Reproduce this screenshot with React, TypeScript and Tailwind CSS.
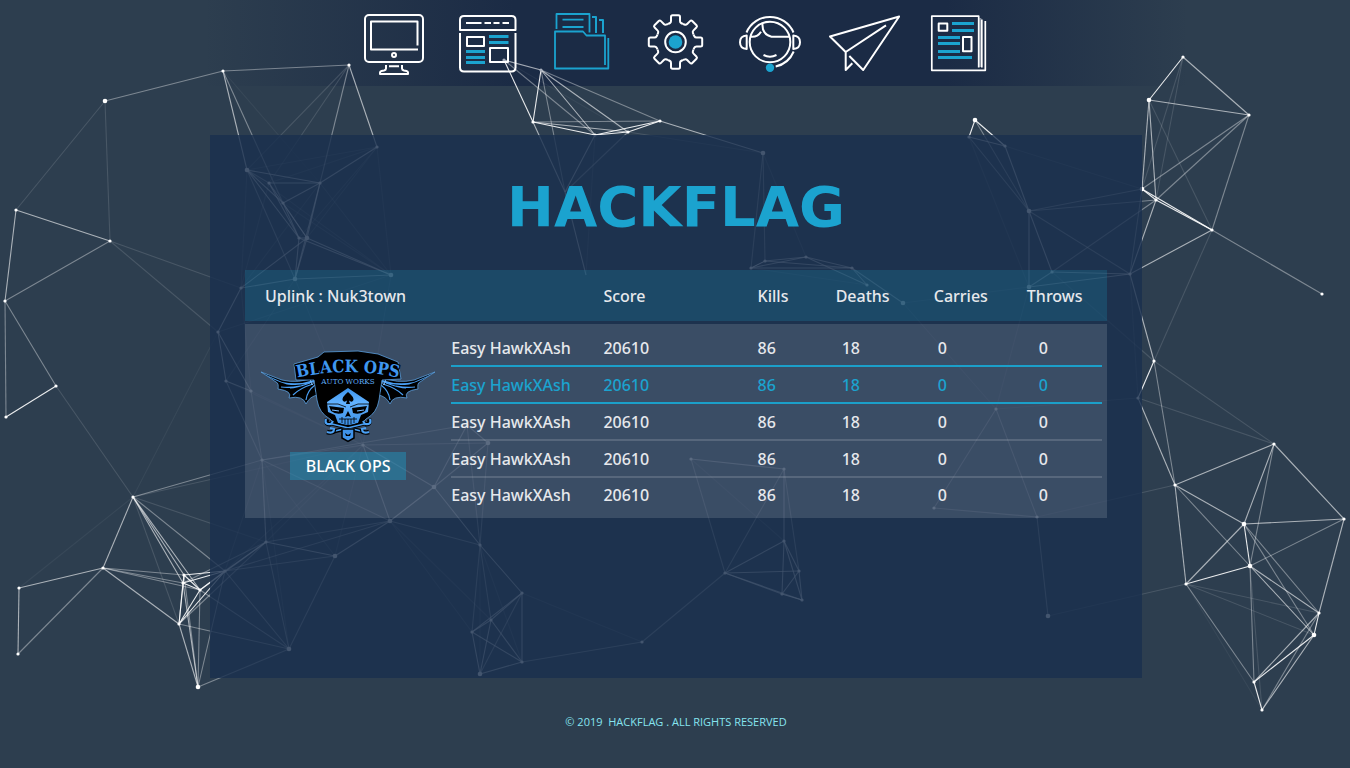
import type { ReactNode } from "react";

type Point = [number, number];

const nodes: Record<string, Point> = {
  a: [105, 101], b: [223, 71], c: [349, 65], d: [16, 210], e: [110, 241], f: [5, 301], g: [56, 386], h: [6, 417],
  i: [377, 147], j: [247, 170], k: [269, 183], l: [320, 183], m: [283, 203], n: [299, 238], o: [307, 238],
  p: [295, 279], q: [391, 275], r: [241, 288], s: [218, 332], t: [226, 381], u: [251, 391],
  v: [133, 497], w: [19, 588], x: [18, 654], y: [103, 568], z: [184, 575],
  A: [183, 583], B: [200, 590], C: [179, 624], D: [198, 687], E: [225, 571], F: [266, 542], G: [335, 556],
  H: [289, 649], I: [262, 460], J: [390, 521], K: [434, 487], L: [363, 445], M: [467, 425], N: [488, 443],
  O: [480, 545], P: [522, 593], Q: [491, 620], R: [472, 632], S: [522, 662], T: [480, 674], U: [642, 642],
  V: [725, 573], W: [691, 459], X: [784, 469], Y: [784, 541], Z: [799, 571],
  a2: [802, 600], b2: [782, 594], c2: [504, 60], d2: [541, 70], e2: [533, 122], f2: [595, 135], g2: [628, 132],
  h2: [660, 121], i2: [565, 192], j2: [763, 153], k2: [586, 275], l2: [751, 268], m2: [765, 261], n2: [806, 257],
  o2: [852, 268], p2: [867, 285], q2: [903, 303], r2: [975, 120], s2: [969, 137], t2: [1005, 146], u2: [1029, 211],
  v2: [1052, 272], w2: [1029, 287], x2: [1130, 274], y2: [1142, 189], z2: [1156, 200],
  A2: [1149, 100], B2: [1183, 57], C2: [1249, 115], D2: [1212, 230], E2: [1322, 294], F2: [1154, 361],
  G2: [1138, 398], H2: [996, 409], I2: [1274, 444], J2: [1175, 485], K2: [1344, 519], L2: [1244, 524],
  M2: [1250, 566], N2: [1186, 584], O2: [1319, 613], P2: [1314, 635], Q2: [1254, 682], R2: [1262, 710],
  S2: [1048, 616], T2: [1037, 517], U2: [934, 508],
};

const largeNodes = ["a", "j", "p", "q", "D", "G", "H", "K", "N", "T", "M2", "P2", "j2", "r2", "u2", "A2", "q2", "w2", "y2", "L2", "S2", "J", "o"];
const hiddenNodes = ["i2", "k2"];
const dimNodes = ["c2", "d2"];

const edgeGroups: { opacity: number; edges: string }[] = [
  {
    opacity: 0.9,
    edges:
      "z-A z-B A-B A-C B-C z-E A-E B-E C-E e2-f2 f2-g2 f2-h2 g2-h2 r2-s2 r2-t2 y2-z2 y2-D2 z2-D2 A2-B2 L2-M2 M2-N2 O2-P2 Q2-R2 G2-F2 g-h c2-e2 d2-e2 b2-a2 P2-Q2 l2-m2",
  },
  {
    opacity: 0.6,
    edges:
      "b-j c-i d-f d-e v-y w-y w-x z-C y-C v-z v-A v-B A-D C-D E-F B-F F-G G-J J-K K-M J-L K-L K-O K-N M-N i-l l-m j-l k-l j-m j-n k-n k-o m-n m-o n-o n-p o-p l-o l-p o-q n-q p-q p-r r-s s-t s-u t-u r-o A2-C2 B2-C2 A2-y2 A2-z2 z2-x2 D2-x2 x2-F2 G2-J2 I2-J2 I2-K2 I2-L2 J2-L2 J2-N2 K2-L2 K2-O2 L2-N2 M2-O2 M2-P2 O2-Q2 P2-R2 c2-d2 d2-f2 d2-g2 e2-g2 h2-j2 e2-i2 f2-i2 O-P P-Q P-R P-S Q-R Q-S Q-T R-S R-T S-T V-Y V-Z V-b2 V-a2 Y-b2 Y-Z Y-a2 Z-a2 Z-b2 X-Y W-X m2-n2 l2-n2 n2-o2 n2-p2 o2-p2 o2-q2 l2-o2 m2-o2 u2-v2 u2-w2 v2-w2 v2-x2 w2-x2 t2-u2 s2-t2 i2-k2 I-F",
  },
  {
    opacity: 0.38,
    edges:
      "a-b b-c e-f f-g f-h c-l b-m y-z y-A y-B v-E B-D z-D v-I y-x D-H D-E C-H B-H F-H G-H E-G I-L I-J J-O t-I u-I L-N I-M K-J O-Q O-R M-O N-O P-T U-V S-U X-Z V-X V-W C2-y2 C2-z2 C2-D2 D2-E2 F2-J2 I2-M2 K2-M2 J2-M2 L2-O2 L2-P2 M2-Q2 N2-Q2 O2-R2 c2-f2 d2-h2 e2-h2 g2-i2 d2-i2 j2-m2 j2-l2 s2-u2 r2-u2 y2-u2 y2-x2 z2-u2 z2-v2 u2-x2 H2-U2 H2-T2 T2-U2 T2-S2 J-E j-k p-j F-J A-F C-F E-H",
  },
  {
    opacity: 0.13,
    edges:
      "a-d a-e e-r e-s g-v v-C v-F v-L c-k c-j i-j i-k i-o i-n i-q l-q q-s q-L p-L r-j r-k r-l r-u p-t t-L u-L I-G I-H I-E L-G L-F L-E M-I P-U O-S O-T J-R J-Q W-Y n2-j2 j2-g2 l2-p2 f2-k2 B2-y2 B2-z2 A2-D2 D2-F2 F2-v2 F2-I2 G2-I2 x2-G2 G2-H2 J2-T2 N2-S2 N2-O2 N2-P2 M2-R2 y2-t2 w2-q2 w2-H2 q2-H2 w2-s2 j-q m-q",
  },
  { opacity: 0.05, edges: "w-v v-s N2-R2 c2-g2 b-l" },
];

function Network() {
  return (
    <svg
      className="pointer-events-none absolute inset-0 h-full w-full"
      viewBox="0 0 1350 768"
      preserveAspectRatio="xMidYMin slice"
      aria-hidden="true"
    >
      {edgeGroups.map((group) => (
        <g key={group.opacity} stroke="#fff" strokeWidth="1.1" strokeOpacity={group.opacity}>
          {group.edges.split(" ").map((edge, index) => {
            const [from, to] = edge.split("-");
            const [x1, y1] = nodes[from];
            const [x2, y2] = nodes[to];
            return <line key={index} x1={x1} y1={y1} x2={x2} y2={y2} />;
          })}
        </g>
      ))}
      {Object.entries(nodes)
        .filter(([id]) => !hiddenNodes.includes(id))
        .map(([id, [cx, cy]]) => (
          <circle
            key={id}
            cx={cx}
            cy={cy}
            r={largeNodes.includes(id) ? 2.3 : 1.6}
            fill={dimNodes.includes(id) ? "#a9b0bd" : "#fff"}
          />
        ))}
    </svg>
  );
}

const CYAN = "#1ba3cf";

function Icon({ left, color = "#fff", children }: { left: number; color?: string; children: ReactNode }) {
  return (
    <svg
      viewBox={`${left} 7 72 72`}
      className="size-[72px]"
      fill="none"
      stroke={color}
      strokeWidth="2"
      strokeLinejoin="round"
      aria-hidden="true"
    >
      {children}
    </svg>
  );
}

const toothAngles = [0, 45, 90, 135, 180, 225, 270, 315];

const navItems: { label: string; icon: ReactNode }[] = [
  {
    label: "Home",
    icon: (
      <Icon left={358}>
        <rect x="365" y="15" width="58" height="47" rx="4" />
        <path d="M417.5 45.5V21.5H371V49.5H418" />
        <circle cx="394" cy="55" r="2" />
        <path d="M389 66.3h10M386 65v3.500q0 1.500-2 2l-2.500.500q-1.500.500-1.500 1.500v1.500h28v-1.500q0-1-1.500-1.500l-2.500-.500q-2-.500-2-2V65" />
      </Icon>
    ),
  },
  {
    label: "Site",
    icon: (
      <Icon left={452}>
        <path d="M460 30V20q0-4 4-4H511.500q4 0 4 4V30ZM460 33V67.500q0 4 4 4H511.500q4 0 4-4V33" />
        <path d="M466 23H481.500M484.500 23H491M493.500 23H499.500M502.500 23H509" />
        <path d="M467 37H484V46H467ZM490 48H508V62H490Z" />
        <path stroke={CYAN} strokeWidth="3" d="M489 36.500H508.500M489 42.500H508.500M466 51.500H485M466 57.500H485M466 62.500H485" />
      </Icon>
    ),
  },
  {
    label: "Files",
    icon: (
      <Icon left={546} color={CYAN}>
        <path strokeWidth="1.8" d="M556.500 29V14H589.500V32.500M562.500 19.700H583.500M562.500 27H583.500" />
        <path strokeWidth="2" d="M592 17H596V33M599 20H603V33" />
        <path strokeWidth="1.8" d="M605 65V35.500H586.500L583 31.500H555V68.500H608.300V38" />
      </Icon>
    ),
  },
  {
    label: "Settings",
    icon: (
      <Icon left={640}>
        <g transform="translate(675.5 42)">
          {toothAngles.map((angle) => (
            <path
              key={angle}
              transform={`rotate(${angle})`}
              d="M-7.400-18L-5.500-19Q-4.500-19.500-4.500-21V-25Q-4.500-26.700-3-26.700H3Q4.500-26.700 4.500-25V-21Q4.500-19.500 5.500-19L7.400-18"
            />
          ))}
          <circle r="10.300" />
          <circle r="6.800" fill={CYAN} stroke="none" />
        </g>
      </Icon>
    ),
  },
  {
    label: "Support",
    icon: (
      <Icon left={734}>
        <circle cx="770" cy="42" r="20.300" />
        <path d="M746.500 32.500A25.500 25.500 0 0 1 793.500 32.500M793.700 51.500A25.500 25.500 0 0 1 775.700 66.500" />
        <path d="M746.700 35.500V49Q740 48.500 740 42.200T746.700 35.500ZM793.300 35.500V49Q800 48.500 800 42.200T793.300 35.500Z" />
        <path d="M762.500 22.500Q761.500 34.500 771.500 36.700H789.500M750.500 36.700Q757.500 37.500 761 31.700M763.500 55Q770 58.300 776.500 55" />
        <circle cx="770" cy="67.700" r="4.200" fill={CYAN} stroke="none" />
      </Icon>
    ),
  },
  {
    label: "Messages",
    icon: (
      <Icon left={828}>
        <path d="M849.300 56L863.200 70L899.200 16.500L830 36.500L845.700 52L886 25.300M845.700 52V70L852.300 63.300" />
      </Icon>
    ),
  },
  {
    label: "News",
    icon: (
      <Icon left={922}>
        <path strokeWidth="1.700" d="M978.700 67.500V16.200H931.800V70.300H985.300V21M981.800 67.500V19.500" />
        <path strokeOpacity=".45" d="M980.300 67V18" />
        <path d="M938.700 23.500H947.300V30.700H938.700ZM963 37H971.500V51.300H963Z" />
        <path stroke={CYAN} strokeWidth="3" d="M952 23.500H974M952 30.500H974M938 37.500H960M938 43.500H960M938 51.500H960M938 57.500H972" />
      </Icon>
    ),
  },
];

function Wing() {
  return (
    <g>
      <path
        fill="#000"
        stroke="#5b9fe0"
        strokeWidth=".8"
        d="M1 26L22 34Q38 38 56 31L62 52L58 49Q50 50 46 58Q43 49 29 52Q33 45 18 43Q19 37 16 36Q9 31 1 26Z"
      />
      <path fill="#4aa0f5" d="M5 28.500L22 36Q38 39.500 54 34L55 36Q40 40.500 27 38.500Q14 34.500 5 28.500Z" />
      <path
        fill="none"
        stroke="#4aa0f5"
        strokeWidth="1.200"
        d="M53 38Q40 42 33 49M55 39Q47 45 46 54M40 40Q30 42 21 41M56 41Q54 45 59 48M50 37Q36 42 30 42"
      />
      <path fill="none" stroke="#8cc6ff" strokeWidth=".8" d="M50 33L52 39L55 35L57 44" />
    </g>
  );
}

function Emblem() {
  return (
    <svg viewBox="0 0 176 98" className="h-[98px] w-44" role="img" aria-label="Black Ops Auto Works emblem">
      <defs>
        <path id="emblem-arc-top" d="M28 34Q88 18 148 34" />
        <linearGradient id="emblem-skull" x1="0" y1="0" x2="0" y2="1">
          <stop offset="0" stopColor="#3b93ec" />
          <stop offset=".4" stopColor="#62b2ff" />
          <stop offset="1" stopColor="#3b8fe6" />
        </linearGradient>
      </defs>
      <Wing />
      <g transform="translate(176 0) scale(-1 1)">
        <Wing />
      </g>
      <path
        fill="#000"
        stroke="#5b9fe0"
        strokeWidth=".8"
        d="M34 18L58 11L64 6L98 5L118 8L138 16L141 33L122 34L119 54Q117 67 106 73L99 80L88 84L77 80L70 73Q59 67 57 54L54 34L36 34Z"
      />
      <path fill="url(#emblem-skull)" d="M88 42L109 56L108 66L101 69L98 77Q88 81 78 77L75 69L68 66L67 56Z" />
      <path d="M88 46Q82 51 82.500 54Q84 57 87 54.500L86 58H90L89 54.500Q92 57 93.500 54Q94 51 88 46Z" />
      <path d="M69 60L84 62L83 67Q76 69 71 65ZM107 60L92 62L93 67Q100 69 105 65ZM88 65L85 71L88 70L91 71Z" />
      <path fill="none" stroke="#7cbcff" strokeWidth="1.200" d="M72 64L79 65M104 64L97 65" />
      <path fill="none" stroke="#000" strokeWidth=".8" d="M66 58L78 58L86 61M110 58L98 58L90 61M79 73H97M82 71V77M85 73V78M88 73V79M91 73V78M94 71V77" />
      <path fill="none" stroke="#000" strokeWidth="4" d="M70 77L104 86M106 77L72 86" />
      <path fill="none" stroke="#4aa0f5" strokeWidth="1.500" d="M72 78L103 85.500M104 78L73 85.500" />
      <g fill="none" stroke="#000" strokeWidth="4.500">
        <path d="M67 73Q65 79 71 78M67 86Q74 88 74 83M109 73Q111 79 105 78M109 86Q102 88 102 83" />
      </g>
      <g fill="none" stroke="#4aa0f5" strokeWidth="2.200">
        <path d="M66 73Q64 79 71 78L73 75M67 86Q74 88 74 83L70 82M110 73Q112 79 105 78L103 75M109 86Q102 88 102 83L106 82" />
      </g>
      <path fill="#3f93ea" stroke="#000" strokeWidth="1.500" d="M82 83H94V92L88 95.500L82 92Z" />
      <path d="M85 87L88 89L91 87L90 90H86Z" />
      <text
        fontFamily="'DejaVu Serif Condensed', 'DejaVu Serif', serif"
        fontWeight="700"
        fontSize="17"
        fill="#3f97ef"
        stroke="#000"
        strokeWidth="2"
        paintOrder="stroke"
        textAnchor="middle"
      >
        <textPath href="#emblem-arc-top" startOffset="50%">
          BLACK OPS
        </textPath>
      </text>
      <text
        x="88"
        y="38"
        fontFamily="'DejaVu Serif Condensed', 'DejaVu Serif', serif"
        fontSize="8"
        fill="#5ea9f3"
        textAnchor="middle"
      >
        AUTO WORKS
      </text>
    </svg>
  );
}

const players = Array.from({ length: 5 }, (_, id) => ({
  id,
  name: "Easy HawkXAsh",
  score: 20610,
  kills: 86,
  deaths: 18,
  carries: 0,
  throws: 0,
}));

const rowStyles = [
  "h-[43px] *:border-[#1b9fc9] *:pt-1.5",
  "h-[37px] text-[#1ba3cf] *:border-[#1b9fc9]",
  "h-[37px] *:border-white/15",
  "h-[37px] *:border-white/15",
  "h-[40px] *:border-transparent *:pb-1",
];

function Scoreboard() {
  return (
    <table className="w-full table-fixed border-separate border-spacing-0 text-left font-['Noto_Sans',sans-serif] text-base leading-6 text-[#e6e8ec]">
      <colgroup>
        <col className="w-[206px]" />
        <col className="w-[152px]" />
        <col className="w-[154px]" />
        <col className="w-[78px]" />
        <col className="w-[98px]" />
        <col className="w-[93px]" />
        <col className="w-[75px]" />
        <col className="w-[5px]" />
      </colgroup>
      <thead>
        <tr className="h-[54px] *:border-b-[3px] *:border-transparent *:bg-[#1ba3cf]/20 *:bg-clip-padding *:p-0 *:font-medium">
          <th scope="col" colSpan={2}>
            <span className="pl-5">Uplink : Nuk3town</span>
          </th>
          <th scope="col">Score</th>
          <th scope="col">Kills</th>
          <th scope="col">Deaths</th>
          <th scope="col">Carries</th>
          <th scope="col" colSpan={2}>
            Throws
          </th>
        </tr>
      </thead>
      <tbody className="bg-white/13 font-medium">
        {players.map((player, index) => (
          <tr key={player.id} className={rowStyles[index]}>
            {index === 0 && (
              <td rowSpan={5} className="align-top">
                <div className="flex flex-col items-center gap-2 pt-4">
                  <Emblem />
                  <button type="button" className="h-7 bg-[#1ba3cf]/40 px-4 leading-7 text-white">
                    BLACK OPS
                  </button>
                </div>
              </td>
            )}
            <td className="border-b-2">{player.name}</td>
            <td className="border-b-2">{player.score}</td>
            <td className="border-b-2">{player.kills}</td>
            <td className="border-b-2 pl-1.5">{player.deaths}</td>
            <td className="border-b-2 pl-1">{player.carries}</td>
            <td className="border-b-2 pl-3">{player.throws}</td>
            {index === 0 && <td rowSpan={5} />}
          </tr>
        ))}
      </tbody>
    </table>
  );
}

export default function App() {
  return (
    <div className="relative flex min-h-screen flex-col overflow-hidden bg-[#2d3e4f] pl-0.5 font-['Open_Sans','Noto_Sans',sans-serif]">
      <header className="bg-[linear-gradient(to_right,transparent_15%,#1b2b45_38%,#1b2b45_70%,transparent_88%)]">
        <Network />
        <nav aria-label="Main" className="relative flex h-[86px] items-center justify-center gap-[22px]">
          {navItems.map((item) => (
            <a key={item.label} href="#" aria-label={item.label}>
              {item.icon}
            </a>
          ))}
        </nav>
      </header>
      <main className="relative mx-auto mt-[49px] w-full max-w-[932px] bg-[#1a304e]/82 px-[35px] pt-10 pb-40">
        <h1 className="mb-[31px] text-center font-['DejaVu_Sans',sans-serif] text-[56px] leading-[64px] font-bold text-[#1ba3cf]">
          HACKFLAG
        </h1>
        <Scoreboard />
      </main>
      <footer className="relative mt-9 pb-9 text-center text-[11px] leading-4 font-medium text-[#86e4ef]">
        © 2019 &nbsp;HACKFLAG . ALL RIGHTS RESERVED
      </footer>
    </div>
  );
}
